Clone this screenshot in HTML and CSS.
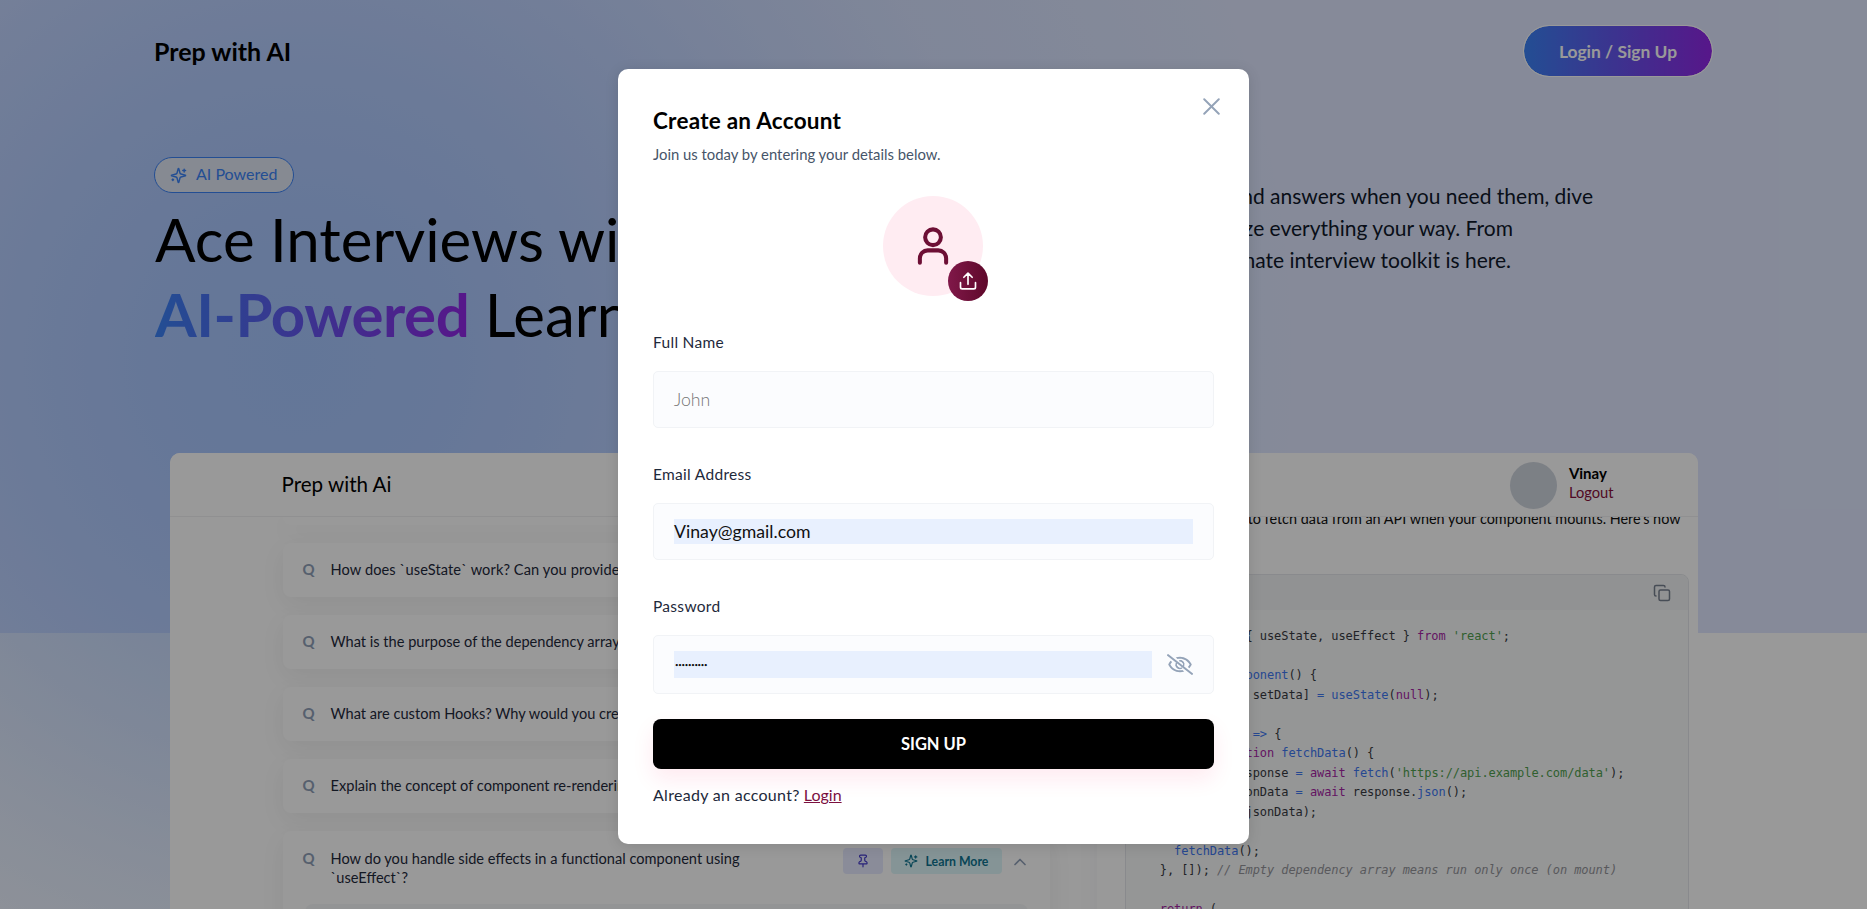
FILE: index.html
```html
<!DOCTYPE html>
<html lang="en">
<head>
<meta charset="utf-8">
<title>Prep with AI</title>
<link rel="stylesheet" href="styles.css">
</head>
<body>
<svg class="defs" aria-hidden="true">
  <symbol id="sparkles" viewBox="0 0 24 24"><path d="M9.937 15.5A2 2 0 0 0 8.5 14.063l-6.135-1.582a.5.5 0 0 1 0-.962L8.5 9.936A2 2 0 0 0 9.937 8.5l1.582-6.135a.5.5 0 0 1 .963 0L14.063 8.5A2 2 0 0 0 15.5 9.937l6.135 1.581a.5.5 0 0 1 0 .964L15.5 14.063a2 2 0 0 0-1.437 1.437l-1.582 6.135a.5.5 0 0 1-.963 0z M20 3v4M22 5h-4M4 17v2M5 18H3"/></symbol>
</svg>
<div class="page">
  <div class="hero-bg"></div>
  <div class="blob"></div>
  <main class="container">
    <header class="topbar">
      <div class="brand">Prep with AI</div>
      <button class="login-btn">Login / Sign Up</button>
    </header>
    <section class="hero">
      <div class="hero-left">
        <div class="pill"><svg class="icon"><use href="#sparkles"/></svg><span>AI Powered</span></div>
        <h1>Ace Interviews with<br><span class="grad">AI-Powered</span> Learning</h1>
      </div>
      <p class="hero-copy"><span class="c1">expand answers when you need them, dive</span><span class="c2">organize everything your way. From</span><span class="c3">ultimate interview toolkit is here.</span></p>
    </section>
    <section class="preview">
      <div class="pv-head">
        <span class="pv-brand">Prep with Ai</span>
        <div class="profile"><div class="avatar"></div><div class="who"><b>Vinay</b><em>Logout</em></div></div>
      </div>
      <div class="pv-body">
        <div class="questions">
          <article class="q stub"></article>
          <article class="q"><i>Q</i><p class="q1">How does `useState` work? Can you provide</p></article>
          <article class="q"><i>Q</i><p>What is the purpose of the dependency array</p></article>
          <article class="q"><i>Q</i><p>What are custom Hooks? Why would you create</p></article>
          <article class="q"><i>Q</i><p class="q4">Explain the concept of component re-rendering</p></article>
          <article class="q open"><i>Q</i><p>How do you handle side effects in a functional component using<br>`useEffect`?</p>
            <div class="tools">
              <span class="pin"><svg class="icon" viewBox="0 0 24 24"><path d="M12 17v5M9 10.76a2 2 0 0 1-1.11 1.79l-1.78.9A2 2 0 0 0 5 15.24V16a1 1 0 0 0 1 1h12a1 1 0 0 0 1-1v-.76a2 2 0 0 0-1.11-1.79l-1.78-.9A2 2 0 0 1 15 10.76V7a1 1 0 0 1 1-1 2 2 0 0 0 0-4H8a2 2 0 0 0 0 4 1 1 0 0 1 1 1z"/></svg></span>
              <span class="more"><svg class="icon"><use href="#sparkles"/></svg><span>Learn More</span></span>
              <svg class="icon chev" viewBox="0 0 24 24"><path d="m18 15-6-6-6 6"/></svg>
            </div>
            <div class="answer"></div>
          </article>
        </div>
        <div class="detail">
          <p class="detail-text">to fetch data from an API when your component mounts. Here's how</p>
          <div class="code">
            <div class="code-head"><svg class="icon" viewBox="0 0 24 24"><rect x="8" y="8" width="14" height="14" rx="2"/><path d="M4 16c-1.1 0-2-.9-2-2V4c0-1.100.9-2 2-2h10c1.100 0 2 .9 2 2"/></svg></div>
<pre><u>import</u> React, { useState, useEffect } <u>from</u> <s>'react'</s>;

<u>function</u> <b>MyComponent</b>() {
  <u>const</u> [data, setData] <b>=</b> <b>useState</b>(<u>null</u>);

  <b>useEffect</b>(() <b>=&gt;</b> {
    <u>async</u> <u>function</u> <b>fetchData</b>() {
      <u>const</u> response <b>=</b> <u>await</u> <b>fetch</b>(<s>'https://api.example.com/data'</s>);
      <u>const</u> jsonData <b>=</b> <u>await</u> response.<b>json</b>();
      <b>setData</b>(jsonData);
    }
    <b>fetchData</b>();
  }, []); <i>// Empty dependency array means run only once (on mount)</i>

  <u>return</u> (
</pre>
          </div>
        </div>
      </div>
    </section>
  </main>
</div>
<div class="overlay">
  <form class="modal">
    <svg class="icon close" viewBox="0 0 14 14"><path d="m1 1 6 6m0 0 6 6M7 7l6-6M7 7l-6 6"/></svg>
    <h2>Create an Account</h2>
    <p class="sub">Join us today by entering your details below.</p>
    <div class="photo">
      <svg class="icon user" viewBox="0 0 24 24"><circle cx="12" cy="7" r="4.500"/><path d="M4.500 21.500v-2.500a4.500 4.500 0 0 1 4.500-4.500h6a4.500 4.500 0 0 1 4.500 4.500v2.500"/></svg>
      <div class="upload"><svg class="icon" viewBox="0 0 24 24"><path d="M3 14v5.500a2 2 0 0 0 2 2h14a2 2 0 0 0 2-2V14M7 7.500l5-5 5 5M12 2.500V16"/></svg></div>
    </div>
    <label>Full Name</label>
    <div class="field"><span class="placeholder">John</span></div>
    <label>Email Address</label>
    <div class="field"><span class="value">Vinay@gmail.com</span></div>
    <label>Password</label>
    <div class="field pass"><span class="value dots">••••••••••</span><svg class="eye" viewBox="0 0 640 512"><path d="M634 471L36 3.510A16 16 0 0 0 13.510 6l-10 12.490A16 16 0 0 0 6 41l598 467.490a16 16 0 0 0 22.490-2.490l10-12.490A16 16 0 0 0 634 471zM296.790 146.470l134.790 105.380C429.360 191.910 380.480 144 320 144a112.260 112.260 0 0 0-23.210 2.470zm46.420 219.070L208.420 260.160C210.650 320.090 259.530 368 320 368a113 113 0 0 0 23.210-2.460zM320 112c98.650 0 189.090 55 237.930 144a285.530 285.530 0 0 1-44 60.200l37.740 29.500a333.700 333.700 0 0 0 52.900-75.110 32.350 32.350 0 0 0 0-29.190C550.290 135.590 442.930 64 320 64c-36.700 0-71.710 7-104.630 18.810l46.410 36.290c18.940-4.300 38.340-7.100 58.220-7.100zm0 288c-98.650 0-189.080-55-237.930-144a285.470 285.470 0 0 1 44.050-60.190l-37.740-29.500a333.600 333.600 0 0 0-52.890 75.100 32.350 32.350 0 0 0 0 29.190C89.720 376.410 197.080 448 320 448c36.700 0 71.710-7.050 104.630-18.810l-46.410-36.280C359.280 397.200 339.890 400 320 400z"/><path class="iris" d="M235 215a96 96 0 0 0 135 125M300 168a92 92 0 0 1 112 92c0 22-7 38-16 52"/></svg></div>
    <button class="signup" type="button">SIGN UP</button>
    <p class="foot"><span class="ask">Already an account?</span> <span class="login">Login</span></p>
  </form>
</div>
</body>
</html>
```
FILE: styles.css
```css
* { box-sizing: border-box; }
body { margin: 0; font-family: Lato, "Open Sans", sans-serif; overflow: hidden; background: #fff; }
h1, h2, p, pre { margin: 0; }
button { font: inherit; border: 0; }
.defs { position: absolute; width: 0; height: 0; }
.icon { fill: none; stroke: currentColor; stroke-width: 2; stroke-linecap: round; stroke-linejoin: round; flex: none; display: block; }
.page { position: relative; height: 909px; overflow: hidden; }
.hero-bg { position: absolute; inset: 0 0 auto; height: 633px; background: #dfe7ff; }
.blob { position: absolute; left: -700px; top: -640px; width: 2000px; height: 2000px; background: radial-gradient(closest-side, rgba(96,156,252,.45) 0, rgba(96,154,252,.42) 14%, rgba(96,152,252,.35) 29%, rgba(96,150,252,.27) 41%, rgba(96,150,252,.18) 53%, rgba(96,150,252,.08) 70%, rgba(96,150,252,0) 100%); }
.container { position: relative; width: 1559px; margin: 0 auto; padding-top: 25px; white-space: nowrap; }
.topbar { display: flex; justify-content: space-between; align-items: center; height: 52px; }
.brand { font-size: 25px; font-weight: 700; padding-bottom: 1px; }
.login-btn { width: 190px; height: 52px; border: 1px solid #fff; border-radius: 26px; color: #fff; font-size: 17.400px; font-weight: 700; background: linear-gradient(90deg, #3b82f6, #9126e6) padding-box, #fff border-box; }
.hero { display: flex; justify-content: space-between; height: 376px; padding-top: 80px; }
.pill { display: flex; align-items: center; gap: 9px; width: 140px; height: 36px; padding: 0 0 3px 15px; border: 1px solid #3b82f6; border-radius: 18px; background: #dfe6f4; color: #3b82f6; font-size: 16px; }
.pill .icon { width: 17px; height: 17px; position: relative; top: 2px; }
h1 { font-size: 60px; font-weight: 400; line-height: 75px; padding: 9px 0 0 1px; }
.grad { font-weight: 700; letter-spacing: -.45px; background: linear-gradient(90deg, #3b82f6, #9126e6); -webkit-background-clip: text; background-clip: text; color: transparent; }
.hero-copy { padding-top: 23px; width: 596px; font-size: 21px; line-height: 32px; color: #10182a; }
.hero-copy span { display: flex; justify-content: flex-end; }
.c1 { padding-right: 120px; }
.c2 { padding-right: 200px; }
.c3 { padding-right: 202px; }
.preview { width: 1528px; height: 600px; margin: 0 auto; border-radius: 10px; background: #fff; overflow: hidden; }
.pv-head { position: relative; z-index: 1; display: flex; justify-content: space-between; height: 64px; border-bottom: 1px solid #f0f0f2; padding: 0 84px 0 112px; align-items: center; background: #fff; }
.pv-brand { font-size: 20.600px; padding-bottom: 1px; }
.profile { display: flex; gap: 12px; align-items: center; font-size: 15px; line-height: 19px; padding-top: 1px; }
.who { padding-bottom: 5px; }
.avatar { width: 47px; height: 47px; border-radius: 50%; background: #cfd5de; }
.profile b, .profile em { display: block; font-style: normal; }
.profile em { color: #880f3c; font-size: 14.700px; }
.pv-body { display: flex; height: 536px; }
.questions { flex: none; width: 767px; margin-left: 113px; display: flex; flex-direction: column; gap: 18px; }
.q { display: flex; align-items: flex-start; flex: none; height: 54px; padding: 17px 20px; border-radius: 8px; background: #fff; box-shadow: 0 8px 26px rgba(0,0,0,.06); font-size: 14.600px; line-height: 19px; color: #1e293b; }
.q.stub { height: 8px; padding: 0; border-radius: 0 0 8px 8px; }
.q i { width: 27px; font-style: normal; font-weight: 700; font-size: 15px; color: #90a0b8; }
.q p { padding-left: 1px; }
.q1 { letter-spacing: .1px; }
.q.open { position: relative; height: 150px; padding-top: 18px; }
.tools { display: flex; align-items: center; margin-left: auto; gap: 8px; height: 26px; margin-top: -1px; font-size: 12px; }
.pin { display: grid; place-items: center; width: 40px; height: 26px; border-radius: 4px; background: #e6eaff; color: #4338ca; }
.pin .icon, .more .icon { width: 14px; height: 14px; }
.more { display: flex; align-items: center; gap: 8px; width: 111px; height: 26px; padding-left: 13px; border-radius: 4px; background: #def7fa; color: #0e7490; font-size: 12.300px; font-weight: 700; }
.chev { width: 20px; height: 20px; color: #90a0b8; margin: 2px 0 0; }
.answer { position: absolute; left: 22px; right: 22px; top: 73px; height: 60px; border-radius: 8px; background: #f6f7f9; }
.detail { position: relative; margin-left: 47px; padding-left: 28px; flex: 1; min-width: 0; background: #fff; box-shadow: 0 0 24px rgba(30,60,90,.04); }
.detail-text { font-size: 14.400px; line-height: 20px; margin-top: -8px; padding-right: 17px; display: flex; justify-content: flex-end; color: #111; }
.code { margin: 45px 9px 0 0; height: 500px; border: 1px solid #e4e7eb; border-radius: 8px; background: #f9fafb; overflow: hidden; }
.code-head { display: flex; align-items: center; justify-content: flex-end; height: 35px; padding-right: 17px; background: #f2f3f5; color: #77808f; }
.code-head .icon { width: 18px; height: 18px; }
pre { font: 12px/19.500px "DejaVu Sans Mono", monospace; letter-spacing: -.08px; padding: 17px 0 0 20px; color: #383a42; }
pre u, pre s, pre b { text-decoration: none; font-weight: 400; }
pre u { color: #a626a4; } pre s { color: #50a14f; } pre b { color: #4078f2; } pre i { color: #94959a; }
.overlay { position: absolute; inset: 0; z-index: 10; display: grid; place-items: center; background: rgba(0,0,0,.4); }
.modal { position: relative; width: 631px; height: 775px; margin-top: 4px; padding: 35px; border-radius: 10px; background: #fff; box-shadow: 0 2px 14px rgba(0,0,0,.12); color: #1e293b; white-space: nowrap; }
.close { position: absolute; right: 29px; top: 29px; width: 17px; height: 17px; color: #94a3b8; stroke-width: 1.600; }
h2 { color: #000; font-size: 22.500px; font-weight: 700; line-height: 34px; letter-spacing: .25px; }
.sub { font-size: 14.850px; line-height: 20px; margin-top: 6px; color: #475569; }
.photo { position: relative; left: -1px; display: grid; place-items: center; width: 100px; height: 100px; margin: 32px auto 0; border-radius: 50%; background: #ffecf2; color: #6d0f35; }
.user { width: 42px; height: 42px; stroke-width: 2.300; }
.upload { position: absolute; right: -5px; bottom: -5px; width: 40px; height: 40px; border-radius: 50%; display: grid; place-items: center; background: linear-gradient(90deg, #801849, #5e082a); color: #fff; }
.upload .icon { width: 20px; height: 20px; }
label { display: block; font-size: 15.500px; letter-spacing: .3px; line-height: 22px; margin-top: 35px; }
.field { display: flex; align-items: center; gap: 15px; height: 57px; margin: 18px 0 0; padding: 0 20px; border: 1px solid #f1f3f6; border-radius: 5px; background: #fbfcfe; font-size: 17.700px; }
.field.pass { height: 59px; }
.placeholder { color: #757575; font-weight: 300; }
.value { flex: 1; line-height: 25px; background: #e8f0fe; color: #111; }
.dots { height: 27px; line-height: 27px; font-size: 6px; letter-spacing: -.25px; padding-left: 1px; }
.eye { flex: none; width: 26px; height: 21px; fill: #94a3b8; }
.iris { fill: none; stroke: #94a3b8; stroke-width: 34; }
.signup { display: block; width: 100%; height: 50px; margin-top: 25px; border-radius: 8px; background: #000; color: #fff; font-size: 16.500px; font-weight: 700; box-shadow: 0 10px 22px rgba(255,20,90,.09); }
.foot { font-size: 16px; line-height: 22px; margin-top: 15px; }
.ask { letter-spacing: .3px; }
.login { color: #7b103f; text-decoration: underline; }
```
